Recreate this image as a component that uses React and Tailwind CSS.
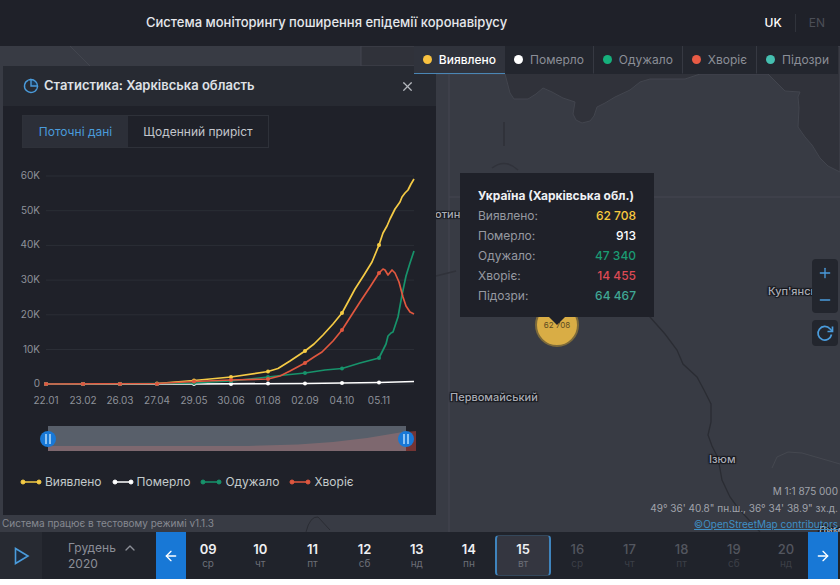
import { useState } from "react";
import { ArrowLeft, ArrowRight, ChevronUp, Minus, Plus, X } from "lucide-react";

const categories = [
  { id: "confirmed", label: "Виявлено", dot: "bg-[#f9c240]" },
  { id: "deaths", label: "Померло", dot: "bg-white" },
  { id: "recovered", label: "Одужало", dot: "bg-[#16b07c]" },
  { id: "existing", label: "Хворіє", dot: "bg-[#e85b45]" },
  { id: "suspicion", label: "Підозри", dot: "bg-[#45bfb0]" },
];

const stats = [
  { label: "Виявлено:", value: "62 708", color: "text-[#f9c93e]" },
  { label: "Померло:", value: "913", color: "text-white" },
  { label: "Одужало:", value: "47 340", color: "text-[#1b9b73]" },
  { label: "Хворіє:", value: "14 455", color: "text-[#dd4a54]" },
  { label: "Підозри:", value: "64 467", color: "text-[#3fa895]" },
];

const days = [
  ["09", "ср"],
  ["10", "чт"],
  ["11", "пт"],
  ["12", "сб"],
  ["13", "нд"],
  ["14", "пн"],
  ["15", "вт"],
  ["16", "ср"],
  ["17", "чт"],
  ["18", "пт"],
  ["19", "сб"],
  ["20", "нд"],
];

const yTicks = ["60K", "50K", "40K", "30K", "20K", "10K", "0"];
const xTicks = ["22.01", "23.02", "26.03", "27.04", "29.05", "30.06", "01.08", "02.09", "04.10", "05.11"];

const series = [
  {
    label: "Виявлено",
    color: "#f5cb45",
    line: "46,224 157,223.5 194,220.5 231,217 268,211.5 278,208.5 290,201 305,191 314,184 323,175 333,164 342,153 348,142 355,129 364,115 372,102 379,85 383,73 387,66 390,59 395,49 400,42 402,37 405,33 408,30 411,24 414,19",
    dots: [224, 224, 224, 223.5, 220.5, 217, 211.5, 191, 153, 85],
  },
  {
    label: "Померло",
    color: "#ffffff",
    line: "46,224 194,224 305,223.5 379,222.5 414,221.5",
    dots: [224, 224, 224, 224, 224, 224, 223.5, 223.5, 223, 222.5],
  },
  {
    label: "Одужало",
    color: "#17936b",
    line: "46,224 157,223.5 194,223 231,221 268,217 285,215 305,213 325,210 342,208.5 360,203 379,198 383,190 386,184 388,176 391,173 393,172 398,157 402,135 406,116 410,103 414,91",
    dots: [224, 224, 224, 224, 223, 221, 217, 213, 208.5, 198],
  },
  {
    label: "Хворіє",
    color: "#e0573f",
    line: "46,224 157,223.5 194,221.5 231,220 268,219 280,216 290,211 305,203 314,197 322,192 333,181 342,170 351,156 360,142 370,127 379,113 383,109 385,110 388,115 392,110 395,113 399,122 403,137 406,146 410,152 414,154",
    dots: [224, 224, 224, 224, 221.5, 220, 219, 203, 170, 113],
  },
];

const haloText =
  "font-medium text-[#a9acb5] [text-shadow:1px_1px_1px_#14151a,-1px_1px_1px_#14151a,1px_-1px_1px_#14151a,-1px_-1px_1px_#14151a]";

const rangeInput =
  "pointer-events-none absolute inset-0 h-full w-full appearance-none bg-transparent [&::-webkit-slider-thumb]:pointer-events-auto [&::-webkit-slider-thumb]:h-4 [&::-webkit-slider-thumb]:w-4 [&::-webkit-slider-thumb]:appearance-none [&::-webkit-slider-thumb]:rounded-full [&::-webkit-slider-thumb]:bg-[linear-gradient(90deg,transparent_5px,#8cc3f3_5px,#8cc3f3_7px,transparent_7px,transparent_9px,#8cc3f3_9px,#8cc3f3_11px,transparent_11px),linear-gradient(#1878d6,#1878d6)] [&::-webkit-slider-thumb]:bg-[length:16px_10px,16px_16px] [&::-webkit-slider-thumb]:bg-center [&::-webkit-slider-thumb]:bg-no-repeat";

function PieIcon() {
  return (
    <svg viewBox="0 0 16 16" className="h-4 w-4" fill="none" stroke="#4a9bdb" strokeWidth="1.4">
      <path d="M8 1.5V8h6.5A6.5 6.5 0 0 0 8 1.5Z" fill="#1d3a57" />
      <path d="M5.3 2.1A6.5 6.5 0 1 0 13.9 10.7" />
      <path d="M5.3 2.1A6.5 6.5 0 0 1 8 1.5M14.5 8a6.5 6.5 0 0 1-.6 2.7" />
    </svg>
  );
}

function MapCanvas() {
  return (
    <svg
      viewBox="0 46 840 486"
      preserveAspectRatio="xMidYMid slice"
      className="absolute inset-0 h-full w-full"
      fill="none"
      aria-hidden="true"
    >
      <path
        d="M361 46H840V172L828 166L820 158L812 145L805 137L798 127L799 108L798 97L800 92L785 91L777 83L768 74L700 74L685 79H650L640 82L630 90L615 97L605 103L597 107L594 116L590 121L582 123L576 120L573 114L575 102L563 98L552 92L543 88L536 94L528 99H514L510 93L505 74H436V66H361Z"
        fill="#30323a"
        stroke="#42454e"
      />
      <path d="M70 46L90 66" stroke="#42454e" />
      <path d="M449 74V532M449 197H840" stroke="#444750" />
      <path d="M504 122V146" stroke="#30323a" strokeWidth="2" />
      <path d="M492 168Q505 158 518 170M436 276L456 271" stroke="#30323a" strokeWidth="1.5" />
      <path
        d="M640 300L650 317L665 334L677 350L683 364L697 377L704 390L711 404V422L708 435L712 446L718 458L722 480L730 497L738 508L760 532"
        stroke="#2a2c33"
        strokeWidth="1.3"
      />
      <path d="M772 468L777 457L788 452L802 453L840 464" stroke="#454850" />
      <path d="M306 532Q310 516 318 517L330 530" stroke="#2a2c33" />
    </svg>
  );
}

function Chart() {
  return (
    <svg viewBox="3 0 433 256" className="block w-full font-['Inter',sans-serif]" role="img" aria-label="Статистика">
      {yTicks.map((tick, i) => (
        <g key={tick}>
          <line x1="46" x2="414" y1={16 + i * 34.7} y2={16 + i * 34.7} stroke="#2b2e36" />
          <text x="40" y={19 + i * 34.7} textAnchor="end" fontSize="10" fill="#8e9199">
            {tick}
          </text>
        </g>
      ))}
      {xTicks.map((tick, i) => (
        <text key={tick} x={46 + i * 37} y="244" textAnchor="middle" fontSize="10" fill="#8e9199">
          {tick}
        </text>
      ))}
      {series.map((s) => (
        <g key={s.label}>
          <polyline points={s.line} fill="none" stroke={s.color} strokeWidth="1.7" strokeLinejoin="round" />
          {s.dots.map((y, i) => (
            <circle key={i} cx={46 + i * 37} cy={y} r="2" fill={s.color} />
          ))}
        </g>
      ))}
    </svg>
  );
}

function RangeSlider() {
  const [from, setFrom] = useState(0);
  const [to, setTo] = useState(319);
  const max = 328;

  return (
    <div className="relative mr-3 ml-[37px] h-[25px] px-2">
      <div className="relative h-full">
        <svg viewBox="0 0 368 25" preserveAspectRatio="none" className="h-full w-full">
          <path d="M0 25V20L200 20L250 18.5L285 16L319 12L352 6.5L368 5V25Z" fill="#743433" />
        </svg>
        <div
          className="absolute inset-y-0 bg-[#8794a0]/55"
          style={{ left: `${(from / max) * 100}%`, right: `${100 - (to / max) * 100}%` }}
        />
      </div>
      <input
        type="range"
        aria-label="Початок періоду"
        max={max}
        value={from}
        onChange={(e) => setFrom(Number(e.target.value))}
        className={rangeInput}
      />
      <input
        type="range"
        aria-label="Кінець періоду"
        max={max}
        value={to}
        onChange={(e) => setTo(Number(e.target.value))}
        className={rangeInput}
      />
    </div>
  );
}

function StatsPanel() {
  const [tab, setTab] = useState("current");

  return (
    <section className="relative ml-[3px] w-[433px] bg-[#1f2129]">
      <div className="flex h-10 items-center bg-[#272a32] pr-[21px] pl-5">
        <PieIcon />
        <h2 className="ml-[5px] flex-1 text-[13px] font-semibold text-[#dfe1e6]">Статистика: Харківська область</h2>
        <button aria-label="Закрити">
          <X className="h-[15px] w-[15px] text-[#b4b7bd]" strokeWidth={2} />
        </button>
      </div>
      <div className="mt-[9px] ml-[19px] flex h-[33px] w-[247px] border border-[#2e3139] text-[12px]">
        <button
          onClick={() => setTab("current")}
          className={tab === "current" ? "w-[105px] bg-[#2c2f38] text-[#4a9bdb]" : "w-[105px] text-[#c3c6cc]"}
        >
          Поточні дані
        </button>
        <button
          onClick={() => setTab("daily")}
          className={tab === "daily" ? "flex-1 bg-[#2c2f38] text-[#4a9bdb]" : "flex-1 text-[#c3c6cc]"}
        >
          Щоденний приріст
        </button>
      </div>
      <div className="mt-3">
        <Chart />
      </div>
      <div className="mt-[10px]">
        <RangeSlider />
      </div>
      <ul className="flex gap-[10px] pt-[22px] pb-6 pl-[17px] text-[12px] leading-[18px] text-[#c3cacb]">
        {series.map((s) => (
          <li key={s.label} className="flex items-center gap-[3px]">
            <svg viewBox="0 0 22 6" className="h-[6px] w-[22px]" fill={s.color} stroke={s.color}>
              <path d="M3 3H19" strokeWidth="1.5" />
              <circle cx="3" cy="3" r="2" />
              <circle cx="19" cy="3" r="2" />
            </svg>
            {s.label}
          </li>
        ))}
      </ul>
    </section>
  );
}

function Tooltip() {
  return (
    <div className="absolute top-[127px] left-[460px] w-[194px] bg-[#1f2129] px-[18px] pt-[13px] pb-[11px] text-[12px] leading-5">
      <h3 className="whitespace-nowrap font-bold text-[#eef0f3]">Україна (Харківська обл.)</h3>
      <dl>
        {stats.map((s) => (
          <div key={s.label} className="flex justify-between">
            <dt className="text-[#9699a1]">{s.label}</dt>
            <dd className={`font-medium ${s.color}`}>{s.value}</dd>
          </div>
        ))}
      </dl>
      <div className="absolute top-full left-1/2 -translate-x-1/2 border-x-8 border-t-8 border-x-transparent border-t-[#1f2129]" />
    </div>
  );
}

function Timeline() {
  const [selected, setSelected] = useState("15");

  return (
    <footer className="relative flex h-[47px] bg-[#20232b] pr-[2px]">
      <button aria-label="Відтворити" className="flex w-[42px] items-center justify-center bg-[#272a32]">
        <svg viewBox="0 0 18 18" className="h-[18px] w-[18px]" fill="#1d2c3f" stroke="#4a9bdb" strokeWidth="1.6">
          <path d="M3.5 1.5V16.5L16 9Z" />
        </svg>
      </button>
      <button className="ml-[6px] flex w-[108px] gap-[6px] pt-2 pl-5 text-left text-[12px] leading-4 text-[#8b8e97]">
        <span>
          Грудень
          <br />
          2020
        </span>
        <ChevronUp className="h-4 w-4" />
      </button>
      <button aria-label="Назад" className="z-10 flex w-[30px] items-center justify-center bg-[#1878d6] text-white">
        <ArrowLeft className="h-4 w-4" />
      </button>
      <div className="-mx-1 flex flex-1 py-[3px]">
        {days.map(([day, name]) => {
          const future = Number(day) > 15;
          return (
            <button
              key={day}
              disabled={future}
              onClick={() => setSelected(day)}
              className={`flex min-w-0 flex-1 flex-col items-center justify-center rounded-sm ${
                selected === day ? "border-x-2 border-y border-x-[#3f84bd] border-y-[#34475a] bg-[#343640]" : ""
              }`}
            >
              <span
                className={
                  future
                    ? "text-[13px] leading-[14px] font-medium text-[#53565f]"
                    : "text-[13px] leading-[14px] font-semibold text-[#eef0f3]"
                }
              >
                {day}
              </span>
              <span className={future ? "text-[10px] leading-[14px] text-[#3c3f47]" : "text-[10px] leading-[14px] text-[#6c6f78]"}>
                {name}
              </span>
            </button>
          );
        })}
      </div>
      <button aria-label="Вперед" className="z-10 flex w-[30px] items-center justify-center bg-[#1878d6] text-white">
        <ArrowRight className="h-4 w-4" />
      </button>
    </footer>
  );
}

export default function App() {
  const [category, setCategory] = useState("confirmed");

  return (
    <div className="overflow-hidden bg-white font-['Inter',sans-serif]">
      <header className="flex h-[46px] items-center bg-[#1f2129] pr-[15px] pl-[146px] text-[13px]">
        <h1 className="flex-1 font-medium text-[#e6e8ec]">Система моніторингу поширення епідемії коронавірусу</h1>
        <nav className="flex items-center text-[12px]">
          <button className="border-r border-[#30333b] pr-[13px] font-medium text-white">UK</button>
          <button className="pl-[13px] text-[#4b4e57]">EN</button>
        </nav>
      </header>

      <main className="relative overflow-hidden bg-[#383b44] pt-5">
        <MapCanvas />

        <span className={`absolute top-[160px] left-[435px] text-[11px] ${haloText}`}>отин</span>
        <span className={`absolute top-[237px] left-[768px] text-[11px] ${haloText}`}>Куп'янськ</span>
        <span className={`absolute top-[343px] left-[450px] text-[11px] ${haloText}`}>Первомайський</span>
        <span className={`absolute top-[405px] left-[709px] text-[11px] ${haloText}`}>Ізюм</span>
        <span className={`absolute top-[476px] left-[818px] text-[11px] ${haloText}`}>Лиман</span>

        <button className="absolute top-[257px] left-[535px] flex h-11 w-11 items-center justify-center rounded-full border-2 border-[#7d6a3a] bg-[#d9ad45] text-[8px] text-[#5d4c22]">
          62 708
        </button>
        <Tooltip />

        <StatsPanel />
        <p className="relative pl-[2px] text-[10px] leading-[17px] text-[#868991]">
          Система працює в тестовому режимі v1.1.3
        </p>

        <nav className="absolute top-0 right-[2px] flex h-7 bg-[#23262e] text-[12px]">
          {categories.map((c, i) => (
            <button
              key={c.id}
              onClick={() => setCategory(c.id)}
              className={`flex items-center gap-[7px] border-b px-[9px] ${
                category === c.id
                  ? "border-b-[#4a86b5] bg-[#30333c] font-medium text-white"
                  : "border-b-transparent text-[#8b8e97]"
              } ${i > 1 ? "border-l border-l-[#363942]" : ""}`}
            >
              <span className={`h-[9px] w-[9px] rounded-full ${c.dot}`} />
              {c.label}
            </button>
          ))}
        </nav>

        <div className="absolute top-[213px] right-[2px] flex w-[26px] flex-col text-[#4a9bdb]">
          <button aria-label="Збільшити" className="flex h-[27px] items-center justify-center rounded-t-sm bg-[#23262e]">
            <Plus className="h-4 w-4" />
          </button>
          <button aria-label="Зменшити" className="flex h-[27px] items-center justify-center rounded-b-sm bg-[#23262e]">
            <Minus className="h-4 w-4" />
          </button>
          <button aria-label="Оновити" className="mt-[7px] flex h-[26px] items-center justify-center rounded-sm bg-[#23262e]">
            <svg viewBox="0 0 18 18" className="h-[18px] w-[18px]" fill="none" stroke="currentColor" strokeWidth="1.7">
              <path d="M15.5 10.5A6.8 6.8 0 1 1 14 4.8L16 7" />
              <path d="M16.5 2.5V7.5H11.5" />
            </svg>
          </button>
        </div>

        <div className="absolute right-[2px] bottom-0 text-right text-[10px] text-[#a0a3ab]">
          <p className="leading-[18px]">М 1:1 875 000</p>
          <p className="leading-[17px]">49° 36' 40.8" пн.ш., 36° 34' 38.9" зх.д.</p>
          <a href="#osm" className="block leading-[15px] text-[#3f8fc4] underline">
            ©OpenStreetMap contributors
          </a>
        </div>
      </main>

      <Timeline />
    </div>
  );
}
